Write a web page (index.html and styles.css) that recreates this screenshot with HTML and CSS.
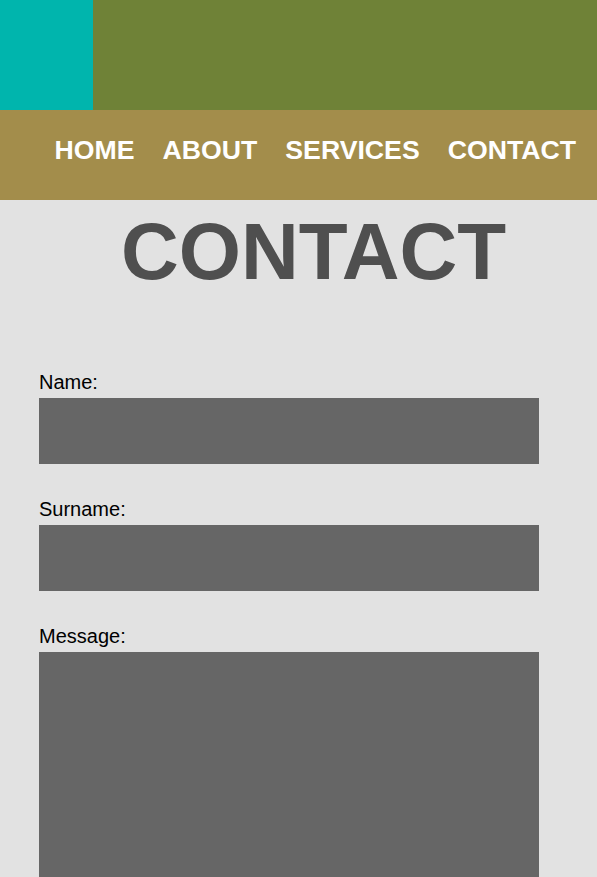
FILE: index.html
```html
<!DOCTYPE html>
<html lang="en">
<head>
    <meta charset="UTF-8">
    <meta name="viewport" content="width=device-width, initial-scale=1.0">
    <title>Contact</title>
    <link rel="stylesheet" href="styles.css">
</head>
<body>
    <!-- Top banner -->
    <header class="top-bar">
        <div class="logo-block"></div>
        <div class="banner"></div>
    </header>

    <!-- Navigation -->
    <nav class="main-nav">
        <a href="#">HOME</a>
        <a href="#">ABOUT</a>
        <a href="#">SERVICES</a>
        <a href="#">CONTACT</a>
    </nav>

    <!-- Contact Section -->
    <main class="contact-section">
        <h1 class="page-title">CONTACT</h1>
        <form class="contact-form">
            <label for="name">Name:</label>
            <input type="text" id="name" class="field">

            <label for="surname">Surname:</label>
            <input type="text" id="surname" class="field">

            <label for="message">Message:</label>
            <textarea id="message" class="field message-field"></textarea>
        </form>
    </main>
</body>
</html>
```

FILE: styles.css
```css
* {
    margin: 0;
    padding: 0;
    box-sizing: border-box;
    font-family: 'Liberation Sans', Arial, sans-serif;
}

body {
    background-color: #e2e2e2;
    color: #000;
}

.top-bar {
    display: flex;
    height: 110px;
}

.logo-block {
    width: 93px;
    background-color: #00b5ad;
}

.banner {
    flex: 1;
    background-color: #6f8237;
}

.main-nav {
    display: flex;
    justify-content: flex-end;
    align-items: flex-start;
    gap: 28px;
    height: 90px;
    padding: 25px 21px 0 0;
    background-color: #a38d4b;
}

.main-nav a {
    color: white;
    text-decoration: none;
    font-size: 26.67px;
    font-weight: bold;
}

.contact-section {
    padding: 6px 0 0 39px;
}

.page-title {
    text-align: center;
    font-size: 80px;
    line-height: 92px;
    font-weight: bold;
    color: #4f4f4f;
    margin-left: -9px;
}

.contact-form {
    display: flex;
    flex-direction: column;
    align-items: flex-start;
    padding-top: 73px;
}

.contact-form label {
    font-size: 20px;
    line-height: 23px;
    margin-bottom: 4px;
}

.field {
    width: 500px;
    height: 66px;
    border: none;
    background-color: #666;
    margin-bottom: 34px;
}

.message-field {
    height: 300px;
    resize: none;
}
```
